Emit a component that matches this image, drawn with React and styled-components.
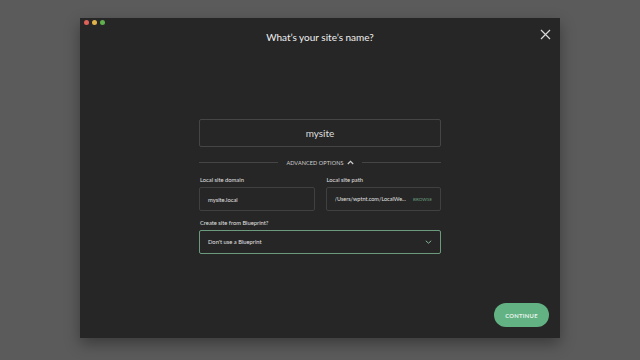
import styled, { createGlobalStyle } from "styled-components";

const Global = createGlobalStyle`
  html, body {
    margin: 0;
    padding: 0;
    background: #5b5b5b;
    font-family: "Lato", "Open Sans", sans-serif;
  }
`;

export default function App() {
  return (
    <>
      <Global />
      <Page>
        <Window>
          <Lights>
            <Light color="#e0605a" />
            <Light color="#e0b34a" />
            <Light color="#5fb14e" />
          </Lights>
          <Header>
            <Title>What’s your site’s name?</Title>
            <Close aria-label="close">
              <svg width="11" height="11" viewBox="0 0 11 11">
                <path d="M1 1L10 10M10 1L1 10" stroke="#d8d8d8" strokeWidth="1.2" />
              </svg>
            </Close>
          </Header>
          <Body>
            <Form>
              <NameInput>mysite</NameInput>
              <Divider>
                <span>ADVANCED OPTIONS</span>
                <svg width="7" height="5" viewBox="0 0 7 5">
                  <path d="M0.8 4L3.5 1.3L6.2 4" stroke="#cfcfcf" strokeWidth="1.2" fill="none" />
                </svg>
              </Divider>
              <Row>
                <Field>
                  <Label>Local site domain</Label>
                  <Input>mysite.local</Input>
                </Field>
                <Field>
                  <Label>Local site path</Label>
                  <Input>
                    <Value>/Users/wptnt.com/LocalWe...</Value>
                    <Browse>BROWSE</Browse>
                  </Input>
                </Field>
              </Row>
              <Field spaced>
                <Label>Create site from Blueprint?</Label>
                <Select>
                  <span>Don't use a Blueprint</span>
                  <svg width="7" height="4" viewBox="0 0 7 4">
                    <path d="M0.8 0.8L3.5 3.2L6.2 0.8" stroke="#86b597" strokeWidth="1" fill="none" />
                  </svg>
                </Select>
              </Field>
            </Form>
          </Body>
          <Footer>
            <Continue>CONTINUE</Continue>
          </Footer>
        </Window>
      </Page>
    </>
  );
}

const Page = styled.div`
  width: 640px;
  height: 360px;
  display: flex;
  justify-content: center;
  padding-top: 18px;
  box-sizing: border-box;
`;

const Window = styled.div`
  position: relative;
  width: 480px;
  height: 320px;
  background: #262626;
  box-shadow: 0 6px 14px rgba(0, 0, 0, 0.35);
  display: flex;
  flex-direction: column;
`;

const Lights = styled.div`
  position: absolute;
  top: 1.5px;
  left: 3.5px;
  display: flex;
  gap: 3px;
`;

const Light = styled.div`
  width: 5px;
  height: 5px;
  border-radius: 50%;
  background: ${(p) => p.color};
`;

const Header = styled.div`
  height: 28px;
  display: flex;
  align-items: flex-end;
  justify-content: center;
  position: relative;
`;

const Title = styled.h1`
  margin: 0;
  font-size: 10px;
  font-weight: 400;
  color: #f0f0f0;
  line-height: 14px;
  padding-bottom: 2px;
`;

const Close = styled.div`
  position: absolute;
  right: 9.5px;
  top: 10.5px;
  width: 11px;
  height: 11px;

  svg {
    display: block;
  }
`;

const Body = styled.div`
  flex: 1;
  display: flex;
  justify-content: center;
  padding-top: 73px;
`;

const Form = styled.div`
  width: 242px;
  display: flex;
  flex-direction: column;
`;

const NameInput = styled.div`
  height: 28px;
  box-sizing: border-box;
  border: 1px solid #454545;
  border-radius: 2px;
  display: flex;
  align-items: center;
  justify-content: center;
  font-size: 10px;
  color: #dedede;
`;

const Divider = styled.div`
  display: flex;
  align-items: center;
  gap: 3px;
  margin-top: 10px;
  height: 11px;
  font-size: 5.5px;
  color: #cfcfcf;
  letter-spacing: 0.1px;

  &::before,
  &::after {
    content: "";
    flex: 1;
    height: 1px;
    background: #454545;
  }
  &::before {
    margin-right: 5px;
  }
  &::after {
    margin-left: 5px;
  }
`;

const Row = styled.div`
  display: grid;
  grid-template-columns: 1fr 1fr;
  gap: 11px;
  margin-top: 8px;
`;

const Field = styled.div`
  display: flex;
  flex-direction: column;
  margin-top: ${(p) => (p.spaced ? "7.5px" : "0")};
`;

const Label = styled.div`
  font-size: 5.8px;
  color: #e0e0e0;
  height: 7px;
  line-height: 7px;
  margin-bottom: 4px;
  margin-left: 1px;
`;

const Input = styled.div`
  height: 24px;
  box-sizing: border-box;
  border: 1px solid #404040;
  border-radius: 2px;
  display: flex;
  align-items: center;
  justify-content: space-between;
  gap: 4px;
  padding: 0 8px;
  font-size: 5.8px;
  color: #e0e0e0;

  svg {
    display: block;
  }
`;

const Value = styled.span`
  font-size: 5.5px;
  white-space: nowrap;
  overflow: hidden;
`;

const Browse = styled.span`
  flex-shrink: 0;
  font-size: 4.5px;
  color: #6a9f7d;
`;

const Select = styled(Input)`
  border: 1px solid #6b9a7c;
`;

const Footer = styled.div`
  display: flex;
  justify-content: flex-end;
  padding: 0 11px 11px 0;
`;

const Continue = styled.div`
  width: 55px;
  height: 24px;
  border-radius: 12px;
  background: #62b283;
  color: #eaf5ee;
  font-size: 5.8px;
  font-weight: 700;
  letter-spacing: 0.3px;
  display: flex;
  align-items: center;
  justify-content: center;
`;
